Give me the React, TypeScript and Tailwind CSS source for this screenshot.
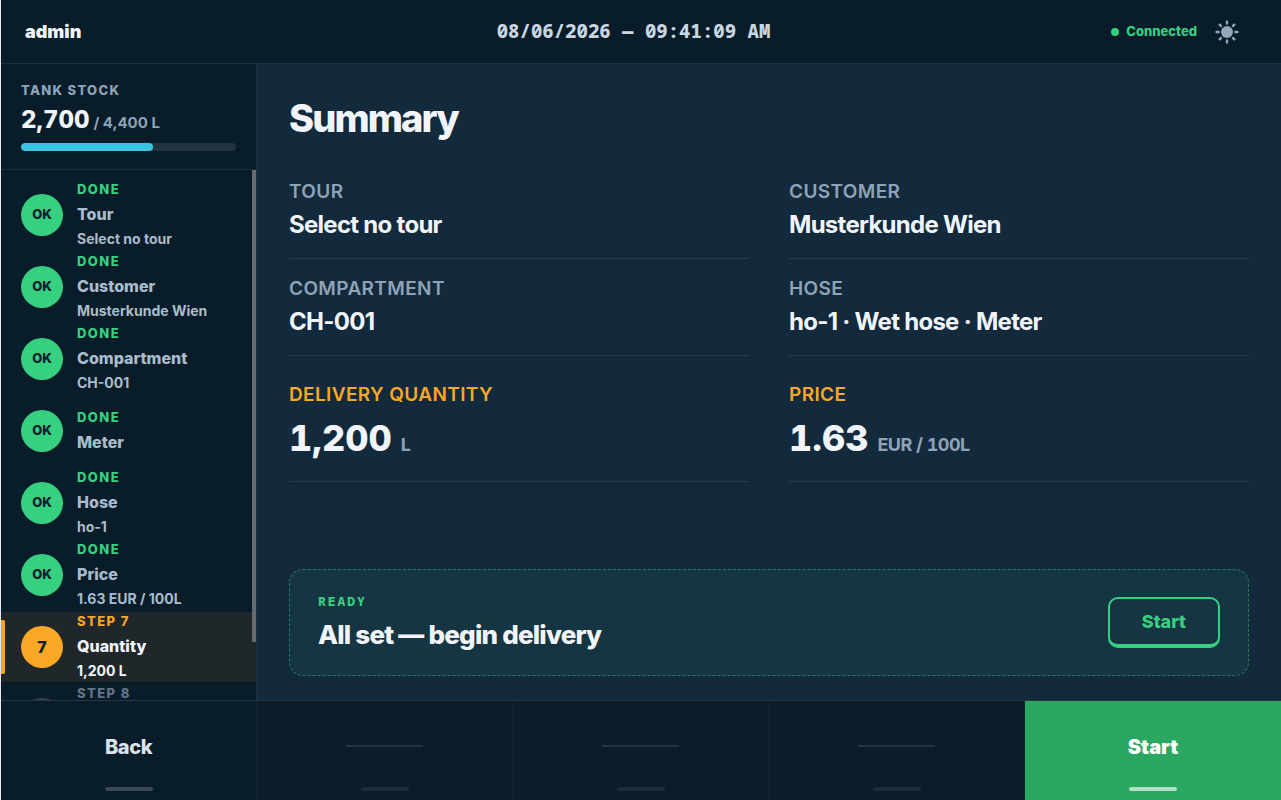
import type { ReactElement } from 'react';

interface IStep {
  title: string;
  detail?: string;
  state: 'done' | 'active' | 'pending';
}

interface IField {
  label: string;
  value: string;
  unit?: string;
}

const steps: IStep[] = [
  { title: 'Tour', detail: 'Select no tour', state: 'done' },
  { title: 'Customer', detail: 'Musterkunde Wien', state: 'done' },
  { title: 'Compartment', detail: 'CH-001', state: 'done' },
  { title: 'Meter', state: 'done' },
  { title: 'Hose', detail: 'ho-1', state: 'done' },
  { title: 'Price', detail: '1.63 EUR / 100L', state: 'done' },
  { title: 'Quantity', detail: '1,200 L', state: 'active' },
  { title: 'Summary', detail: 'Ready', state: 'pending' },
];

const fields: IField[] = [
  { label: 'Tour', value: 'Select no tour' },
  { label: 'Customer', value: 'Musterkunde Wien' },
  { label: 'Compartment', value: 'CH-001' },
  { label: 'Hose', value: 'ho-1 · Wet hose · Meter' },
];

const amounts: IField[] = [
  { label: 'Delivery quantity', value: '1,200', unit: 'L' },
  { label: 'Price', value: '1.63', unit: 'EUR / 100L' },
];

const badgeStyles = {
  done: 'bg-[#36d080] text-[#091c29] text-[13px]',
  active: 'bg-[#f9a825] text-[#091c29] text-base',
  pending: 'border-2 border-[#33404a] text-[#64748b] text-base',
};

const labelStyles = {
  done: 'text-[#36d080]',
  active: 'text-[#f9a825]',
  pending: 'text-[#64748b]',
};

const textStyles = {
  done: 'text-[#a9bccc]',
  active: 'text-[#f1f5fb]',
  pending: 'text-[#64748b]',
};

function SunIcon(): ReactElement {
  return (
    <svg viewBox="0 0 24 24" className="size-6" aria-hidden="true">
      <circle cx="12" cy="12" r="6" fill="#94a8bc" />
      <g stroke="#94a8bc" strokeWidth="2.4" strokeLinecap="round">
        <path d="M12 1.6v2M12 20.4v2M1.6 12h2M20.4 12h2M4.7 4.7l1.3 1.3M18 18l1.3 1.3M4.7 19.3L6 18M18 6l1.3-1.3" />
      </g>
    </svg>
  );
}

function Header(): ReactElement {
  return (
    <header className="grid h-16 shrink-0 grid-cols-[1fr_auto_1fr] items-center border-b border-[#1c303c] bg-[#091c29] pl-6 pr-[42px]">
      <span className="text-lg font-black text-[#f1f5fb]">admin</span>
      <time className="pl-[3px] font-['Noto_Sans_Mono','DejaVu_Sans_Mono',monospace] text-[19px] font-extrabold text-[#c8d6e2]">
        08/06/2026 — 09:41:09 AM
      </time>
      <div className="flex items-center justify-end gap-[18px]">
        <div className="flex items-center gap-[7px] text-[13px] font-extrabold text-[#36d080]">
          <span className="size-2 rounded-full bg-[#36d080]" />
          Connected
        </div>
        <button type="button" aria-label="Toggle theme">
          <SunIcon />
        </button>
      </div>
    </header>
  );
}

function TankStock({ current, total }: { current: number; total: number }): ReactElement {
  return (
    <div className="shrink-0 border-b border-[#1c303c] px-5 pt-[17px] pb-[18px]">
      <div className="text-[13px] leading-[18px] font-extrabold uppercase tracking-[0.1em] text-[#8ea3b7]">Tank stock</div>
      <div className="mt-[5px] mb-1 flex h-[35px] items-baseline gap-1 leading-8">
        <span className="text-2xl leading-8 font-extrabold tabular-nums text-[#f1f5fb]">
          {current.toLocaleString('en-US')}
        </span>
        <span className="text-[15px] font-bold text-[#8ea3b7]">/ {total.toLocaleString('en-US')} L</span>
      </div>
      <div className="h-2 overflow-hidden rounded-full bg-[#23323f]">
        <div className="h-full rounded-full bg-[#38c5e2]" style={{ width: `${(current / total) * 100}%` }} />
      </div>
    </div>
  );
}

function StepItem({ step, index }: { step: IStep; index: number }): ReactElement {
  const { title, detail, state } = step;

  return (
    <li
      className={`relative flex h-[70px] shrink-0 items-center gap-[14px] px-5 ${
        state === 'active' ? 'bg-[#20272a]' : ''
      }`}
    >
      {state === 'active' && <span className="absolute left-0 inset-y-2 w-1 rounded-r-xs bg-[#f9a825]" />}
      <span
        className={`flex size-[42px] shrink-0 items-center justify-center rounded-full font-extrabold ${badgeStyles[state]}`}
      >
        {state === 'done' ? 'OK' : index + 1}
      </span>
      <div className="pb-[2px]">
        <div className={`text-[13px] leading-6 font-extrabold uppercase tracking-[0.11em] ${labelStyles[state]}`}>
          {state === 'done' ? 'Done' : `Step ${index + 1}`}
        </div>
        <div className={`text-base leading-[26px] font-extrabold ${textStyles[state]}`}>{title}</div>
        {detail && <div className={`text-sm leading-6 font-bold ${textStyles[state]}`}>{detail}</div>}
      </div>
    </li>
  );
}

function Sidebar(): ReactElement {
  return (
    <aside className="flex w-64 shrink-0 flex-col border-r border-[#1c303c] bg-[#091c29]">
      <TankStock current={2700} total={4400} />
      <div className="relative min-h-0 flex-1">
        <ol className="flex h-full flex-col gap-[2px] overflow-y-auto py-[10px] [scrollbar-width:none]">
          {steps.map((step, index) => (
            <StepItem key={step.title} step={step} index={index} />
          ))}
        </ol>
        <span className="absolute right-0 top-0 h-[89%] w-1 bg-[#666b6e]" />
      </div>
    </aside>
  );
}

function Summary(): ReactElement {
  return (
    <main className="flex min-w-0 flex-1 flex-col overflow-y-auto bg-[#132a3c] px-8 pb-6 pt-8">
      <h1 className="text-[38px] leading-[44px] font-extrabold tracking-[-0.05em] text-[#f1f5fb]">Summary</h1>
      <dl className="mt-[22px] grid grid-cols-2 gap-x-10">
        {fields.map((field) => (
          <div key={field.label} className="border-b border-[#263c49] pb-[17px] pt-[18px]">
            <dt className="text-[19px] leading-6 font-semibold uppercase tracking-[0.02em] text-[#8ea3b7]">
              {field.label}
            </dt>
            <dd className="mt-[5px] text-2xl leading-8 font-bold tracking-[-0.03em] text-[#f1f5fb]">{field.value}</dd>
          </div>
        ))}
        {amounts.map((field) => (
          <div key={field.label} className="border-b border-[#263c49] pb-[21px] pt-[27px]">
            <dt className="text-[19px] leading-6 font-semibold uppercase tracking-[0.02em] text-[#f9a825]">
              {field.label}
            </dt>
            <dd className="mt-[9px] flex items-baseline gap-[9px] leading-[44px] tabular-nums">
              <span className="text-4xl leading-[44px] font-extrabold text-[#f1f5fb]">{field.value}</span>
              <span className="text-lg font-bold tracking-[-0.03em] text-[#8ea3b7]">{field.unit}</span>
            </dd>
          </div>
        ))}
      </dl>
      <section className="mt-auto flex items-center justify-between rounded-[14px] border border-dashed border-[#287a5f] bg-[#163542] px-7 py-[22px]">
        <div>
          <p className="font-['Noto_Sans_Mono','DejaVu_Sans_Mono',monospace] text-[13px] leading-[18px] font-extrabold uppercase tracking-[0.15em] text-[#36d080]">
            Ready
          </p>
          <p className="mt-[7px] text-[26px] leading-9 font-extrabold tracking-[-0.03em] text-[#f1f5fb]">
            All set — begin delivery
          </p>
        </div>
        <button
          type="button"
          className="h-[51px] rounded-[10px] border-2 border-b-4 border-[#36d080] px-8 text-lg font-extrabold text-[#36d080]"
        >
          Start
        </button>
      </section>
    </main>
  );
}

function SoftKeys(): ReactElement {
  const blanks = ['F2', 'F3', 'F4'];

  return (
    <footer className="grid h-[100px] shrink-0 grid-cols-5 border-t border-[#263642]">
      <button
        type="button"
        className="flex flex-col items-center justify-end border-r border-[#14242f] bg-[#091c29] pb-[9px] text-xl font-extrabold tracking-[-0.02em] text-[#d8e3ed]"
      >
        Back
        <span className="mt-[26px] h-1 w-12 rounded-full bg-[#3c4953]" />
      </button>
      {blanks.map((key) => (
        <button
          key={key}
          type="button"
          disabled
          aria-label={key}
          className="flex flex-col items-center justify-end border-r border-[#14242f] bg-[#0c1c28] pb-[9px]"
        >
          <span className="h-[2px] w-[30%] bg-[#253540]" />
          <span className="mt-10 h-1 w-12 rounded-full bg-[#1f2d39]" />
        </button>
      ))}
      <button
        type="button"
        className="flex flex-col items-center justify-end bg-[#2aa861] pb-[9px] text-xl font-black text-white"
      >
        Start
        <span className="mt-[26px] h-1 w-12 rounded-full bg-[#b0dfc4]" />
      </button>
    </footer>
  );
}

function App(): ReactElement {
  return (
    <div className="flex h-screen flex-col border-l border-[#e5e7eb] bg-[#091c29] font-['Inter',sans-serif]">
      <Header />
      <div className="flex min-h-0 flex-1">
        <Sidebar />
        <Summary />
      </div>
      <SoftKeys />
    </div>
  );
}

export default App;
